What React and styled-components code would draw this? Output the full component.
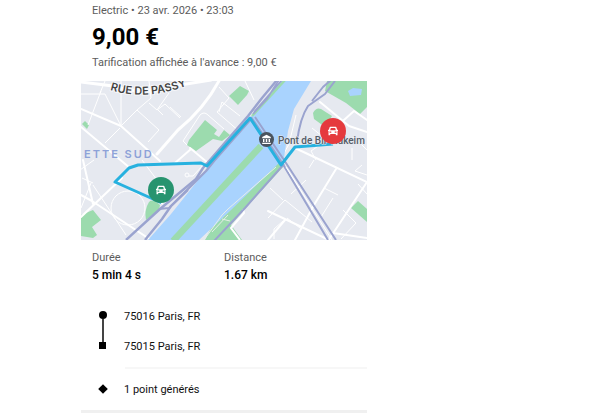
import React from "react";
import styled, { createGlobalStyle } from "styled-components";

const App = () => {
  return (
    <>
      <GlobalStyle />
      <Page>
        <Receipt>
          <Header>
            <Caption>Electric • 23 avr. 2026 • 23:03</Caption>
            <Price>9,00 €</Price>
            <Caption>Tarification affichée à l'avance : 9,00 €</Caption>
          </Header>
          <TripMap />
          <Stats>
            <div>
              <StatLabel>Durée</StatLabel>
              <StatValue>5 min 4 s</StatValue>
            </div>
            <div>
              <StatLabel>Distance</StatLabel>
              <StatValue>1.67 km</StatValue>
            </div>
          </Stats>
          <Stops>
            <Stop>
              <Marker>
                <Dot />
                <Line />
              </Marker>
              <StopText>75016 Paris, FR</StopText>
            </Stop>
            <Stop>
              <Marker>
                <Line />
                <Square />
              </Marker>
              <StopText>75015 Paris, FR</StopText>
            </Stop>
          </Stops>
          <Points>
            <Diamond viewBox="0 0 10 10" aria-hidden="true">
              <path d="M5 0.2 9.8 5 5 9.8 0.2 5Z" />
            </Diamond>
            <StopText>1 point générés</StopText>
          </Points>
        </Receipt>
      </Page>
    </>
  );
};

export default App;

const Car = ({ x, y }) => (
  <g transform={`translate(${x} ${y})`}>
    <path
      fill="#fff"
      fillRule="evenodd"
      d="M-2.7-4.3H2.7Q3.2-4.3 3.4-3.8L4.1-1.3H5V-.1H4.5V4.2H2.8V2.9H-2.8V4.2H-4.5V-.1H-5V-1.3H-4.1L-3.4-3.8Q-3.2-4.3-2.7-4.3ZM-2.2-3-2.8-.8H2.8L2.2-3ZM-3.5.6V1.8H-1.7V.6ZM1.7.6V1.8H3.5V.6Z"
    />
  </g>
);

const TripMap = () => (
  <MapSvg viewBox="81 81 286 159" preserveAspectRatio="xMidYMid slice" role="img" aria-label="Trajet">
    <rect x="81" y="81" width="286" height="159" fill="#e6e9f0" />

    {/* parks */}
    <g fill="#9cdbae">
      <path d="M82 124 85 121 89 125 87 129Z" />
      <path d="M205 120 217 130 214 134 219 137 224 130 230 135 222 141 213 139 196 151 187 145 189 140Z" />
      <path d="M240 86 249 91 247 95 238 105 229 96Z" />
      <path d="M327 81H367V107L360 114 346 103 325 91Z" />
      <path d="M313 113Q316 107 321 109L332 116 325 127 314 119Z" />
      <path d="M358 201 367 209V222L351 208Z" />
      <path d="M81 215 93 210 101 220 92 227 97 235 93 238 81 236Z" />
      <path d="M149 202Q153 198 160 205L159 210 146 220Q144 210 149 202Z" />
    </g>
    <path fill="#a9d3fe" d="M348 91 353 88 362 89 361 95 350 96Z" />

    {/* thin streets */}
    <g fill="none" stroke="#fff" strokeWidth="1">
      <path d="M101 91 88 125M81 94H105L121 126V81M120 128 105 143M121 126 137 110 159 130 148 142M105 81 100 93M137 110 151 98 149 81M149 103 157 110 165 104 180 118M158 110 163 115M157 110 169 93" />
      <path d="M187 145 183 141 200 115Q204 111 208 115L224 129M217 112 240 132M217 112 229 98M229 98 219 87M219 112 222 102 240 116M170 107 181 117M245 81 254 100" />
      <path d="M94 160 80 170M142 160 157 180M81 208 91 183M93 185 126 235M82 178 93 183" />
      <circle cx="128" cy="208" r="17" />
      <circle cx="187" cy="175" r="2" />
      <path d="M189 176H193L205 163" />
      <path d="M268 218 285 200 312 222M274 239V229L283 221M283 200 270 188M324 188 338 195M333 198 321 217M343 210 356 223 341 239M291 194 306 180M309 168 314 160M367 175 355 171 362 165M300 228 287 218M358 184 367 194" />
      <path d="M316 160 311 151 327 140 312 128M352 148V160M345 144 354 137 367 150M296 115 289 144 282 157" />
    </g>

    {/* main streets */}
    <g fill="none" stroke="#fff" strokeWidth="3" strokeLinecap="round" strokeLinejoin="round">
      <path d="M81 82 113 86 Q150 97 180 85L211 80" />
      <path d="M81 109 121 126 160 161" strokeWidth="2" />
      <path d="M81 127 130 168" strokeWidth="2" />
      <path d="M157 154 178 130Q205 108 220 79" />
      <path d="M81 195 92 201 151 240M81 217 122 178M83 160 93 204" strokeWidth="2" />
      <path d="M190 148 208 163M191 149 175 163" strokeWidth="2" />
      <path d="M268 211 329 240M285 220 268 240M295 240 314 205 336 169M295 148 312 156 367 182M330 238 367 182M333 233 367 238" strokeWidth="2" />
      <path d="M320 102 349 126M344 120 354 111 367 120M349 126 367 132" strokeWidth="2" />
    </g>

    {/* river and banks */}
    <path fill="#9cdbae" d="M277 162 283 167 244 210 231 225 242 240H205L216 218Z" />
    <path fill="#a9d3fe" d="M281 81H311L294 109 288 131 284 158 230 211 199 240H148L171 214 211 164 251 117Z" />
    <path fill="none" stroke="#9cdbae" strokeWidth="6.5" d="M173 241 261 146" />
    <path fill="none" stroke="#e6eee9" strokeWidth="1" d="M204 240 222 215 228 209 276 167M222 219 230 221M228 215 212 232" />
    <path fill="none" stroke="#fff" strokeWidth="2" d="M243 209 244 213 231 228 240 240" />
    <path fill="none" stroke="#9cdbae" strokeWidth="2.5" d="M252 116 285 80" />

    {/* railway and express roads */}
    <g fill="none" stroke="#9aa3cf" strokeWidth="2.4" strokeLinejoin="round">
      <path d="M126 240 160 209 196 179 203 168 248 116 262 98 277 80" />
      <path d="M145 240 162 219 171 206 196 181 206 171 214 161 251 119" />
      <path d="M159 209 169 208 188 190" strokeWidth="2" />
      <path d="M253 114 267 99 275 86 279 80M254 112 282 80" strokeWidth="1.6" />
      <path d="M214 241 245 208 284 164" strokeWidth="2" />
      <path d="M251 117 281 161 328 240M255 117 286 163 336 240" strokeWidth="2" />
      <path d="M297 142Q300 118 308 106L325 94 335 81M312 101 323 87 331 80" strokeWidth="2" />
    </g>
    <path fill="none" stroke="#fff" strokeWidth="1" d="M286 167 332 240" />

    {/* place names */}
    <defs>
      <path id="passy" d="M110 90Q146 101 186 86L206 78" />
    </defs>
    <StreetName>
      <textPath href="#passy">RUE DE PASSY</textPath>
    </StreetName>
    <DistrictName x="84" y="158">ETTE SUD</DistrictName>

    {/* route */}
    <path
      fill="none"
      stroke="#27b1df"
      strokeWidth="3"
      strokeLinejoin="round"
      d="M162 203 115 182 129 168 138 165 201 163 207 166 250 118 281 165 295 147 333 144"
    />
    <PlaceName x="278" y="144">Pont de Bir-Hakeim</PlaceName>

    <circle cx="266.5" cy="139.5" r="7.5" fill="#4a545e" />
    <path
      fill="#fff"
      d="M266.5 134.8 270.8 137V138.2H262.2V137ZM263 139H264.4V142H263ZM265.8 139H267.2V142H265.8ZM268.6 139H270V142H268.6ZM262.2 142.8H270.8V144H262.2Z"
    />
    <path d="M160 202H164L162 205Z" fill="#fff" />
    <circle cx="161" cy="190" r="13" fill="#27946f" />
    <Car x={161} y={190} />
    <circle cx="333" cy="131" r="13" fill="#e53a3d" />
    <Car x={333} y={131} />
  </MapSvg>
);

const GlobalStyle = createGlobalStyle`
  * {
    box-sizing: border-box;
  }

  body {
    margin: 0;
    background: #fff;
    color: #111;
    font-family: Roboto, "Liberation Sans", sans-serif;
    font-size: 11px;
    line-height: 16px;
  }
`;

const Page = styled.main`
  display: grid;
  grid-template-columns: 81fr 286fr 233fr;
`;

const Receipt = styled.article`
  grid-column: 2;
  border-bottom: 3px solid #f0f0f0;
`;

const Header = styled.header`
  padding: 3px 11px 10px;
`;

const Caption = styled.p`
  margin: 0;
  color: #5c5c5c;
  white-space: nowrap;
`;

const Price = styled.h1`
  margin: 4px 0;
  font-size: 24px;
  font-weight: 700;
  line-height: 28px;
  color: #000;
`;

const MapSvg = styled.svg`
  display: block;
  width: 100%;
`;

const StreetName = styled.text`
  font-family: Inter, sans-serif;
  font-size: 11px;
  font-weight: 600;
  fill: #444;
  stroke: #f6f7fa;
  stroke-width: 2px;
  paint-order: stroke;
`;

const DistrictName = styled.text`
  font-family: Inter, sans-serif;
  font-size: 11px;
  font-weight: 600;
  letter-spacing: 2px;
  fill: #8da2d8;
`;

const PlaceName = styled.text`
  font-size: 10px;
  font-weight: 500;
  fill: #555d68;
  stroke: #e6e9f0;
  stroke-width: 1px;
  paint-order: stroke;
`;

const Stats = styled.dl`
  display: grid;
  grid-template-columns: 12fr 13fr;
  margin: 0;
  padding: 10px 0 0 11px;
`;

const StatLabel = styled.dt`
  color: #5c5c5c;
`;

const StatValue = styled.dd`
  margin: 0;
  padding-top: 1px;
  font-size: 12px;
  font-weight: 500;
  color: #000;
`;

const Stops = styled.ol`
  margin: 0;
  padding: 18px 0 6px;
  list-style: none;
`;

const Stop = styled.li`
  display: grid;
  grid-template-columns: 43px 1fr;
  align-items: center;
  height: 30px;
`;

const StopText = styled.span`
  padding-top: 2px;
`;

const Marker = styled.span`
  display: flex;
  flex-direction: column;
  align-items: center;
  justify-content: flex-end;
  height: 30px;
  width: 43px;
`;

const Dot = styled.span`
  width: 8px;
  height: 8px;
  border-radius: 50%;
  background: #000;
`;

const Line = styled.span`
  width: 2px;
  height: 12px;
  background: #444;
`;

const Square = styled.span`
  width: 7px;
  height: 7px;
  margin-bottom: 12px;
  background: #000;
`;

const Points = styled.p`
  display: grid;
  grid-template-columns: 43px 1fr;
  align-items: center;
  margin: 0;
  height: 43px;
  background: linear-gradient(#f7f7f7, #f7f7f7) 44px 0 / 100% 2px no-repeat;
`;

const Diamond = styled.svg`
  width: 10px;
  height: 10px;
  justify-self: center;
`;
